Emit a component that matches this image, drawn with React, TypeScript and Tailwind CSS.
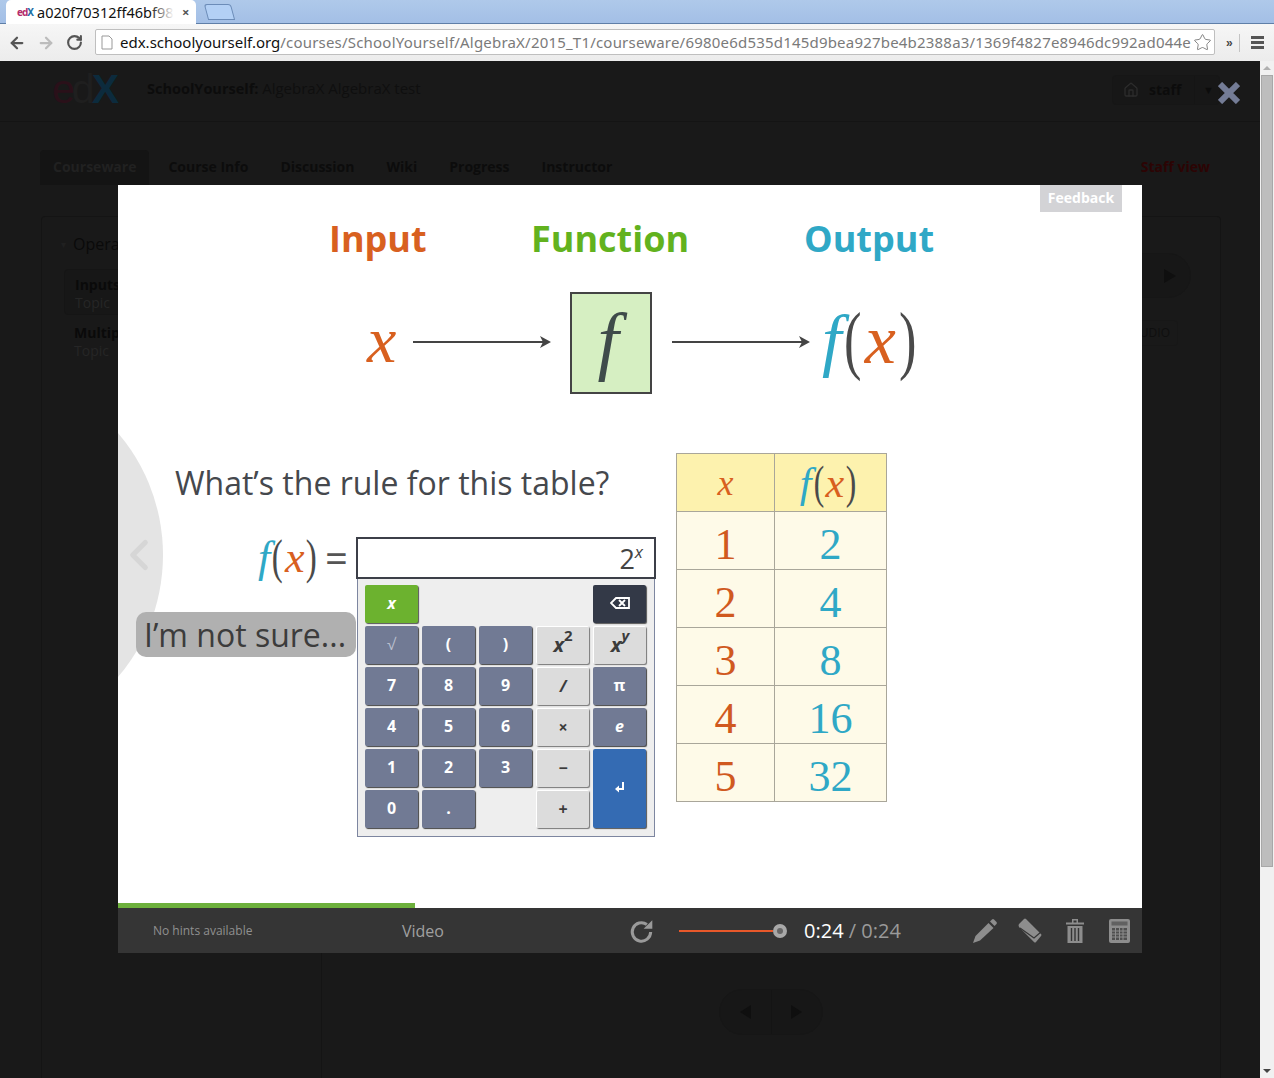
import { ArrowLeft, ArrowRight, RotateCw, Star, ChevronLeft, House } from 'lucide-react';

const serif = 'font-["Liberation_Serif",serif]';
const sans = 'font-["Open_Sans",sans-serif]';

const Paren = ({ children }: { children: string }) => (
  <span className="inline-block scale-x-75 scale-y-110 font-light">{children}</span>
);

const FX = ({ size }: { size: string }) => (
  <span className={`${serif} ${size} leading-none whitespace-nowrap text-[#4a4a4a]`}>
    <i className="text-[#2fa8c6]">f</i>
    <Paren>(</Paren>
    <i className="text-[#d8601f]">x</i>
    <Paren>)</Paren>
  </span>
);

const Arrow = ({ width }: { width: number }) => (
  <svg width={width} height="14" viewBox={`0 0 ${width} 14`} className="shrink-0 mb-[2px]">
    <path d={`M0 7H${width - 6}`} stroke="#444" strokeWidth="2" />
    <path d={`M${width - 11} 1L${width} 7L${width - 11} 13L${width - 8} 7Z`} fill="#444" />
  </svg>
);

type KeyKind = 'slate' | 'light' | 'green' | 'dark' | 'blue';
const kinds: Record<KeyKind, string> = {
  slate: 'bg-[#717a94] text-white shadow-[1px_1px_1px_#444]',
  light: 'bg-[#dcdcdc] text-[#3b3b3b] shadow-[1px_1px_1px_#777] border-t border-l border-white',
  green: 'bg-[#6cb22f] text-white shadow-[1px_1px_1px_#555]',
  dark: 'bg-[#333947] text-white shadow-[1px_1px_1px_#555]',
  blue: 'bg-[#346bb3] text-white shadow-[1px_1px_1px_#555] row-span-2',
};

const Key = ({ kind = 'slate', children, className = '' }: { kind?: KeyKind; children?: React.ReactNode; className?: string }) => (
  <div className={`flex items-center justify-center rounded-[2px] pb-[2px] text-[16px] font-bold ${kinds[kind]} ${className}`}>
    {children}
  </div>
);

const Blank = () => <div />;

const Keypad = () => (
  <div className={`${sans} w-[298px] h-[258px] border border-[#7d86a0] border-t-0 bg-[#eeeeee] pl-[7px] pr-[7px] pt-[6px] grid grid-cols-[53px_53px_53px_53px_53px] grid-rows-[38px_38px_38px_38px_38px_38px] gap-x-[4px] gap-y-[3px]`}>
    <Key kind="green"><i>x</i></Key>
    <Blank /><Blank /><Blank />
    <Key kind="dark">
      <svg width="20" height="12" viewBox="0 0 20 12">
        <path d="M6 1H19V11H6L1 6Z" fill="none" stroke="#fff" strokeWidth="1.8" />
        <path d="M9 3L15 9M15 3L9 9" stroke="#fff" strokeWidth="1.8" />
      </svg>
    </Key>
    <Key><span className="font-normal text-[#b9bfce]">√</span></Key>
    <Key>(</Key>
    <Key>)</Key>
    <Key kind="light" className="text-[20px]"><i>x</i><sup className="text-[15px] not-italic -mt-1">2</sup></Key>
    <Key kind="light" className="text-[20px]"><i>x</i><sup className="text-[15px] -mt-1"><i>y</i></sup></Key>
    <Key>7</Key><Key>8</Key><Key>9</Key>
    <Key kind="light"><i>/</i></Key>
    <Key>π</Key>
    <Key>4</Key><Key>5</Key><Key>6</Key>
    <Key kind="light">×</Key>
    <Key><i>e</i></Key>
    <Key>1</Key><Key>2</Key><Key>3</Key>
    <Key kind="light">−</Key>
    <Key kind="blue">
      <svg width="10" height="12" viewBox="0 0 10 12">
        <path d="M8 0V7H3" fill="none" stroke="#fff" strokeWidth="2" />
        <path d="M4 3.5V10.5L0 7Z" fill="#fff" />
      </svg>
    </Key>
    <Key>0</Key>
    <Key>.</Key>
    <Blank />
    <Key kind="light">+</Key>
  </div>
);

const rows = [
  [1, 2],
  [2, 4],
  [3, 8],
  [4, 16],
  [5, 32],
];

const ValueTable = () => (
  <table className={`${serif} w-[211px] h-[349px] border-collapse table-fixed`}>
    <thead>
      <tr className="h-[58px] bg-[#fdf2ae]">
        <th className="w-[98px] border border-[#a9a69a] font-normal text-[36px] text-[#d8601f]"><i>x</i></th>
        <th className="border border-[#a9a69a] font-normal pr-[3px]"><FX size="text-[42px]" /></th>
      </tr>
    </thead>
    <tbody>
      {rows.map(([a, b]) => (
        <tr key={a} className="h-[58px] bg-[#fefae8] text-[44px] leading-none">
          <td className="border border-[#a9a69a] text-center text-[#d0591f] pt-[8px]">{a}</td>
          <td className="border border-[#a9a69a] text-center text-[#2fa8c6] pt-[8px]">{b}</td>
        </tr>
      ))}
    </tbody>
  </table>
);

const Slide = () => (
  <div className="relative h-[723px] bg-white overflow-hidden">
    <div className="absolute left-[-331px] top-[182px] w-[376px] h-[376px] rounded-full bg-[#e4e4e4]" />
    <ChevronLeft className="absolute left-[-4px] top-[345px] text-[#d6d6d6]" size={50} strokeWidth={2.5} />
    <div className={`${sans} absolute right-[20px] top-0 w-[82px] h-[27px] pb-[3px] bg-[#d3d3d6] text-white text-[14px] font-bold flex items-center justify-center`}>
      Feedback
    </div>
    <div className="absolute left-0 bottom-0 w-[297px] h-[5px] bg-[#6db03c]" />

    <div className={`${sans} relative pt-[29px] pl-[211px] flex font-bold text-[36px] leading-[50px]`}>
      <span className="w-[202px] text-[#d8601f]">Input</span>
      <span className="w-[273px] text-[#62b21e]">Function</span>
      <span className="text-[#2fa8c6]">Output</span>
    </div>

    <div className={`relative mt-[28px] pl-[249px] flex items-center ${serif}`}>
      <i className="w-[46px] mb-[6px] text-[66px] leading-none text-[#d8601f]">x</i>
      <Arrow width={138} />
      <div className="ml-[20px] mr-[19px] -translate-x-px w-[82px] h-[102px] bg-[#d6efc2] border-2 border-[#444] flex items-center justify-center">
        <i className="mb-[6px] mr-[6px] text-[76px] leading-none text-[#3f4b4a]">f</i>
      </div>
      <Arrow width={138} />
      <span className="ml-[12px] mb-[6px]"><FX size="text-[70px]" /></span>
    </div>

    <div className="relative mt-[60px] pl-[57px] flex items-start">
      <div className="w-[481px] flex flex-col">
        <div className={`${sans} mt-[7px] text-[32px] leading-[44px] text-[#45484d]`}>What’s the rule for this table?</div>
        <div className="mt-[32px] h-[42px] flex items-center">
          <span className="ml-[83px] w-[98px] h-[42px] flex items-center gap-[6px]">
            <FX size="text-[44px]" />
            <span className={`${sans} text-[40px] leading-none text-[#555]`}>=</span>
          </span>
          <div className="w-[300px] h-[42px] border-2 border-[#3c3f48] bg-white flex items-center justify-end pr-[11px]">
            <span className={`${sans} text-[27px] leading-none text-[#444]`}>2<sup className="text-[17px] italic -top-[11px]">x</sup></span>
          </div>
        </div>
        <div className="flex items-start">
          <div className={`${sans} ml-[-39px] mt-[33px] w-[220px] h-[45px] rounded-[10px] bg-[#b0b0b0] text-[#3c3c3c] text-[32px] leading-[45px] pl-[8px] whitespace-nowrap`}>
            I’m not sure...
          </div>
          <div className="ml-[1px]"><Keypad /></div>
        </div>
      </div>
      <div className="ml-[20px] -mt-[1px] shrink-0"><ValueTable /></div>
    </div>
  </div>
);

const ControlBar = () => (
  <div className={`${sans} h-[45px] bg-[#353535] flex items-center`}>
    <span className="ml-[35px] w-[249px] text-[12px] text-[#909090]">No hints available</span>
    <span className="w-[227px] text-[16px] text-[#a0a0a0]">Video</span>
    <svg width="26" height="26" viewBox="0 0 24 24" className="shrink-0 text-[#9a9a9a]">
      <path d="M20 13a8.500 8.500 0 1 1-3.500-7" fill="none" stroke="currentColor" strokeWidth="2.800" />
      <path d="M21.500 2v8h-8Z" fill="currentColor" />
    </svg>
    <div className="ml-[24px] w-[108px] flex items-center">
      <div className="flex-1 h-[2px] bg-[#e8582a]" />
      <div className="w-[14px] h-[14px] rounded-full bg-[#a8a8a8] flex items-center justify-center shrink-0">
        <div className="w-[6px] h-[6px] rounded-full bg-[#666]" />
      </div>
    </div>
    <span className="ml-[17px] w-[168px] text-[20px] text-[#9a9a9a]"><span className="text-white">0:24</span> / 0:24</span>
    <div className="flex items-center gap-[19px] text-[#8d8d8d]">
      <svg width="26" height="26" viewBox="0 0 26 26"><path d="M1 25l2.500-7L16.500 5l5 5L8 22.500Z" fill="currentColor" /><path d="M18 3.500l2-2a1.500 1.500 0 0 1 2 0l2.500 2.500a1.500 1.500 0 0 1 0 2l-2 2Z" fill="currentColor" /></svg>
      <svg width="26" height="26" viewBox="0 0 26 26"><path d="M2 6L7 1Q8 0 9 1L24 16Q25 17 24 18L19 24Q18 25 17 24L2 9Q1 7 2 6Z" fill="currentColor" /><path d="M3 10L17 20L24 14" fill="none" stroke="#353535" strokeWidth="1.200" /></svg>
      <svg width="26" height="26" viewBox="0 0 26 26"><path d="M4 4.500h18v2H4ZM10 1h6v3.500h-1.500V2.500h-3v2H10ZM5.500 8h15v17h-15Z" fill="currentColor" /><path d="M9.500 10v13M13 10v13M16.500 10v13" stroke="#353535" strokeWidth="1.400" /></svg>
      <svg width="26" height="26" viewBox="0 0 26 26"><rect x="2" y="1" width="21" height="24" rx="2" fill="currentColor" /><path d="M4.500 3.500h16v4h-16Z" fill="#353535" opacity=".5" /><path d="M5 10h15v12H5Z" fill="#353535" opacity=".7" /><path d="M8.500 10v12M12.500 10v12M16 10v12M5 13h15M5 16h15M5 19h15" stroke="#8d8d8d" strokeWidth="1" /></svg>
    </div>
  </div>
);

const Outline = () => (
  <div className="w-[280px] shrink-0 border-r border-[#141414] pt-[15px]">
    <div className="pl-[19px] flex items-center text-[16px] font-normal text-[#0a0a0a]">
      <span className="text-[10px] text-[#202020] w-[12px]">▾</span>Operators
    </div>
    <div className="ml-[22px] mt-[13px] h-[46px] rounded border border-[#151515] bg-[#171717] pl-[10px] pt-[6px] leading-[18px]">
      <div className="text-[#0a0a0a]">Inputs</div>
      <div className="font-normal text-[#262626]">Topic</div>
    </div>
    <div className="ml-[32px] mt-[9px] leading-[18px]">
      <div className="text-[#0a0a0a]">Multiply</div>
      <div className="font-normal text-[#262626]">Topic</div>
    </div>
  </div>
);

const DimmedPage = () => (
  <div className={`${sans} h-full bg-[#191919] font-bold text-[14px] flex flex-col`}>
    <div className="h-[61px] shrink-0 border-b border-[#141414] flex items-center justify-between pl-[52px] pr-[40px] pb-[3px]">
      <div className="flex items-center">
        <span className="font-['Liberation_Sans',sans-serif] text-[41px] leading-none tracking-[-3px] font-normal">
          <span className="text-[#2a1019]">e</span><span className="text-[#1f1f1f]">d</span><span className="font-bold text-[#0c2b3d]">X</span>
        </span>
        <span className="ml-[31px] -mt-[2px] text-[14.5px] text-[#0c0c0c]">SchoolYourself: <span className="text-[15px] font-normal text-[#0f0f0f]">AlgebraX AlgebraX test</span></span>
      </div>
      <div className="w-[108px] h-[30px] rounded border border-[#161616] bg-[#171717] flex items-center pl-[10px] text-[#0c0c0c]">
        <House size={16} className="text-[#2c2c2c]" />
        <span className="ml-[10px] w-[45px]">staff</span>
        <span className="h-full border-l border-[#151515] pl-[8px] leading-[28px] text-[11px]">▼</span>
      </div>
    </div>
    <div className="mt-[28px] h-[35px] shrink-0 pl-[40px] pr-[50px] flex items-start justify-between">
      <div className="flex items-start text-[#0c0c0c] leading-[19px]">
        <span className="h-[35px] px-[13px] pt-[7px] rounded-t bg-[#141414] text-[#212121]">Courseware</span>
        <span className="ml-[19px] pt-[7px]">Course Info</span>
        <span className="ml-[32px] pt-[7px]">Discussion</span>
        <span className="ml-[32px] pt-[7px]">Wiki</span>
        <span className="ml-[32px] pt-[7px]">Progress</span>
        <span className="ml-[32px] pt-[7px]">Instructor</span>
      </div>
      <span className="pt-[7px] leading-[19px] text-[#2c0404]">Staff view</span>
    </div>
    <div className="mt-[31px] ml-[41px] w-[1180px] flex-1 min-h-0 rounded-t border border-b-0 border-[#141414] flex">
      <Outline />
      <div className="flex-1 flex flex-col pb-[43px] pt-[36px]">
        <div className="self-end mr-[29px] w-[100px] h-[45px] rounded-r-full border border-[#161616] bg-[#171717] flex items-center justify-end pr-[14px]">
          <svg width="12" height="14" viewBox="0 0 12 14"><path d="M0 0L12 7L0 14Z" fill="#0f0f0f" /></svg>
        </div>
        <div className="self-end mr-[42px] mt-[22px] h-[26px] w-[70px] rounded border border-[#171717] text-right pr-[7px] text-[12px] font-normal leading-[24px] text-[#0f0f0f]">AUDIO</div>
        <div className="flex-1" />
        <div className="self-center w-[104px] h-[46px] rounded-full border border-[#161616] bg-[#171717] flex">
          <div className="flex-1 border-r border-[#141414] flex items-center justify-center">
            <svg width="11" height="14" viewBox="0 0 11 14"><path d="M11 0L0 7L11 14Z" fill="#0f0f0f" /></svg>
          </div>
          <div className="flex-1 flex items-center justify-center">
            <svg width="11" height="14" viewBox="0 0 11 14"><path d="M0 0L11 7L0 14Z" fill="#0f0f0f" /></svg>
          </div>
        </div>
      </div>
    </div>
  </div>
);

export default function App() {
  return (
    <div className="relative w-[1274px] h-[1078px] overflow-hidden flex flex-col font-['Liberation_Sans',sans-serif]">
      <div className="h-[24px] shrink-0 bg-gradient-to-b from-[#afc9ea] to-[#a3bfe6] border-b border-[#5f7fa8] flex items-end pl-[6px] relative">
        <div className="relative z-10 w-[190px] h-[24px] -mb-[1px] pt-[1px] bg-white rounded-t-[5px] flex items-center pl-[11px] text-[14.5px] text-[#111] font-['Noto_Sans',sans-serif]">
          <span className="text-[10px] font-bold tracking-[-1px] w-[20px]"><span className="text-[#b42b6b]">ed</span><span className="text-[#1d6fa5]">X</span></span>
          <span className="relative w-[137px] overflow-hidden whitespace-nowrap">
            a020f70312ff46bf98
            <span className="absolute right-0 top-0 bottom-0 w-[24px] bg-gradient-to-r from-transparent to-white" />
          </span>
          <span className="ml-[8px] text-[#555] text-[13px] font-bold">×</span>
        </div>
        <div className="ml-[10px] w-[27px] h-[16px] mb-[3px] rounded-t-[3px] skew-x-[15deg] bg-[#b3d0f5] border border-[#6c8cb8]" />
      </div>
      <div className="h-[37px] shrink-0 bg-gradient-to-b from-[#f6f6f6] to-[#ececec] flex items-center pl-[8px] pr-[8px]">
        <ArrowLeft size={18} strokeWidth={3} className="text-[#555]" />
        <ArrowRight size={18} strokeWidth={3} className="ml-[11px] text-[#bcbcbc]" />
        <RotateCw size={17} strokeWidth={3} className="ml-[11px] text-[#555]" />
        <div className="ml-[12px] mb-[1px] w-[1120px] h-[26px] bg-white rounded-[2px] border border-[#bfbfbf] flex items-center pl-[5px] pr-[2px] text-[15px] font-['Noto_Sans',sans-serif]">
          <svg width="12" height="15" viewBox="0 0 12 15" className="shrink-0"><path d="M1 1H8L11 4V14H1Z" fill="#fff" stroke="#999" /></svg>
          <div className="ml-[7px] flex-1 min-w-0 overflow-hidden whitespace-nowrap text-[#7a7a7a] tracking-[0.2px]"><span className="text-[#111] tracking-normal">edx.schoolyourself.org</span>/courses/SchoolYourself/AlgebraX/2015_T1/courseware/6980e6d535d145d9bea927be4b2388a3/1369f4827e8946dc992ad044e</div>
          <Star size={19} strokeWidth={1} className="shrink-0 text-[#666]" />
        </div>
        <span className="ml-[11px] text-[12px] font-bold text-[#444]">»</span>
        <div className="ml-[6px] w-px h-[18px] bg-[#c4c4c4]" />
        <div className="ml-[11px] flex flex-col gap-[2px]">
          <div className="w-[13px] h-[3px] bg-[#555]" />
          <div className="w-[13px] h-[3px] bg-[#555]" />
          <div className="w-[13px] h-[3px] bg-[#555]" />
        </div>
      </div>
      <div className="flex-1 flex min-h-0">
        <div className="flex-1 min-w-0"><DimmedPage /></div>
        <div className="w-[14px] shrink-0 bg-[#f1f1f1] flex flex-col items-center px-[1px]">
          <svg width="8" height="14" viewBox="0 0 8 14" className="shrink-0"><path d="M0 9L4 5L8 9Z" fill="#b0b0b0" /></svg>
          <div className="w-full h-[792px] bg-[#bdbdbd] border border-[#a8a8a8]" />
          <div className="flex-1" />
          <svg width="8" height="14" viewBox="0 0 8 14" className="shrink-0"><path d="M0 5L4 9L8 5Z" fill="#444" /></svg>
        </div>
      </div>

      <div className="absolute left-[118px] top-[185px] w-[1024px] flex flex-col">
        <Slide />
        <ControlBar />
      </div>
      <div className="absolute left-[1218px] top-[82px] text-[#747c96]">
        <svg width="22" height="22" viewBox="0 0 22 22"><path d="M2 2L20 20M20 2L2 20" stroke="currentColor" strokeWidth="6" /></svg>
      </div>
    </div>
  );
}
